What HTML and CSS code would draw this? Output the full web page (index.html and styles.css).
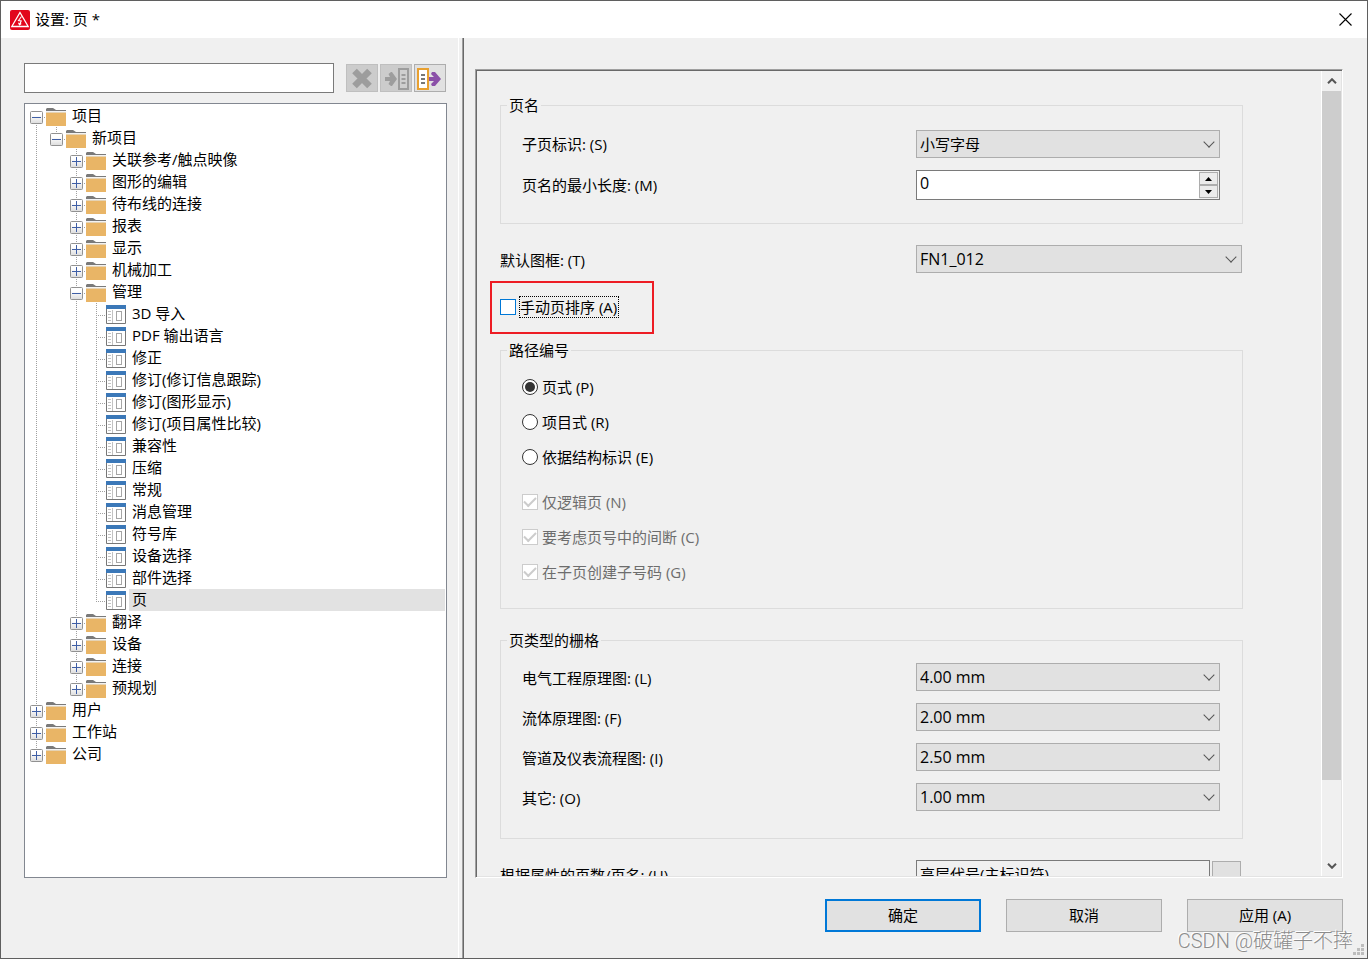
FILE: index.html
```html
<!DOCTYPE html>
<html lang="zh-CN">
<head>
<meta charset="utf-8">
<title>设置: 页 *</title>
<link rel="stylesheet" href="styles.css">
</head>
<body>
<svg class="sprite" aria-hidden="true">
  <defs>
    <linearGradient id="toggle-fill" x1="0" y1="0" x2="0" y2="1"><stop offset="0.3" stop-color="#fff"/><stop offset="1" stop-color="#dcdcdc"/></linearGradient>
    <symbol id="plus" viewBox="0 0 13 13"><rect x=".5" y=".5" width="12" height="12" rx="1" fill="url(#toggle-fill)" stroke="#919191"/><path d="M2 6.500h9M6.500 2v9" stroke="#3f5fa6"/></symbol>
    <symbol id="minus" viewBox="0 0 13 13"><rect x=".5" y=".5" width="12" height="12" rx="1" fill="url(#toggle-fill)" stroke="#919191"/><path d="M2 6.500h9" stroke="#3f5fa6"/></symbol>
    <symbol id="folder" viewBox="0 0 20 18"><path d="M0 1 1 0H7L10 2H20V3H0Z" fill="#7a7a7a"/><path d="M0 3h20v1H0z" fill="#f2f2f2"/><path d="M0 4h20v1H0z" fill="#e5d3b5"/><path d="M0 5h20v13H0z" fill="#e9b566"/></symbol>
    <symbol id="page" viewBox="0 0 20 19"><path d="M.5 1v17.500H19.500V1" fill="#fff" stroke="#777"/><path d="M0 0h20v4H0z" fill="#3b78b8"/><path d="M2 6.500h3M2 9.500h3M2 12.500h3M2 15.500h3" stroke="#c2c2c2"/><path d="M6.500 5v13" stroke="#c2c2c2"/><rect x="10.500" y="6.500" width="5" height="9" fill="#fff" stroke="#a6a6a6"/></symbol>
  </defs>
</svg>
<div class="window">
  <header class="titlebar">
    <svg class="app-icon" viewBox="0 0 20 20" aria-hidden="true"><rect width="20" height="20" rx="2" fill="#e2061c"/><path d="M10 2.500 18.200 16.500H1.800Z" fill="none" stroke="#fff" stroke-width="1.300"/><path d="M11.500 6.500 8.500 10.500l2.700.5-1.500 3.500M8.500 12.800l1 2 1.700-1.300" fill="none" stroke="#fff" stroke-width="1.100"/></svg>
    <h1 class="title">设置: 页 *</h1>
    <button class="close" type="button" aria-label="关闭"><svg viewBox="0 0 13 13" width="13" height="13"><path d="M.5.5l12 12M12.500.5l-12 12" stroke="#000" stroke-width="1.100"/></svg></button>
  </header>
  <div class="body">
    <aside class="sidebar">
      <div class="search">
        <input class="search-box" type="text" aria-label="搜索">
        <div class="tools">
          <button class="tool" type="button" aria-label="清除" disabled><svg viewBox="0 0 30 26"><path d="M7.500 6l15 15M22.500 6l-15 15" stroke="#9d9d9d" stroke-width="6.500"/></svg></button>
          <button class="tool" type="button" aria-label="导入" disabled><svg viewBox="0 0 30 26"><path d="M4 12h5L7.500 9 10 7h1l5 7-5 7h-1l-2.500-2L9 16H4z" fill="#9d9d9d"/><rect x="18" y="4" width="9" height="20" fill="#cfcfcf" stroke="#9d9d9d" stroke-width="2"/><path d="M20.500 10h4M20.500 14h4M20.500 18h4" stroke="#9d9d9d" stroke-width="2"/></svg></button>
          <button class="tool" type="button" aria-label="导出"><svg viewBox="0 0 30 26"><path d="M14 12h5l-3-3 1-2h3l6 7-6 7h-3l-1-2 3-3h-5z" fill="#8b50a8"/><rect x="3" y="4" width="10" height="20" fill="#fff" stroke="#e8a030" stroke-width="2"/><path d="M6 10h4M6 14h4M6 18h4" stroke="#777" stroke-width="2"/></svg></button>
        </div>
      </div>
      <div class="tree-box">
        <ul class="tree">
          <li><div class="row"><button class="toggle" type="button" aria-label="折叠"><svg><use href="#minus"/></svg></button><svg class="icon"><use href="#folder"/></svg><span class="name">项目</span></div>
            <ul class="tree">
              <li><div class="row"><button class="toggle" type="button" aria-label="折叠"><svg><use href="#minus"/></svg></button><svg class="icon"><use href="#folder"/></svg><span class="name">新项目</span></div>
                <ul class="tree">
                  <li><div class="row"><button class="toggle" type="button" aria-label="展开"><svg><use href="#plus"/></svg></button><svg class="icon"><use href="#folder"/></svg><span class="name">关联参考/触点映像</span></div></li>
                  <li><div class="row"><button class="toggle" type="button" aria-label="展开"><svg><use href="#plus"/></svg></button><svg class="icon"><use href="#folder"/></svg><span class="name">图形的编辑</span></div></li>
                  <li><div class="row"><button class="toggle" type="button" aria-label="展开"><svg><use href="#plus"/></svg></button><svg class="icon"><use href="#folder"/></svg><span class="name">待布线的连接</span></div></li>
                  <li><div class="row"><button class="toggle" type="button" aria-label="展开"><svg><use href="#plus"/></svg></button><svg class="icon"><use href="#folder"/></svg><span class="name">报表</span></div></li>
                  <li><div class="row"><button class="toggle" type="button" aria-label="展开"><svg><use href="#plus"/></svg></button><svg class="icon"><use href="#folder"/></svg><span class="name">显示</span></div></li>
                  <li><div class="row"><button class="toggle" type="button" aria-label="展开"><svg><use href="#plus"/></svg></button><svg class="icon"><use href="#folder"/></svg><span class="name">机械加工</span></div></li>
                  <li><div class="row"><button class="toggle" type="button" aria-label="折叠"><svg><use href="#minus"/></svg></button><svg class="icon"><use href="#folder"/></svg><span class="name">管理</span></div>
                    <ul class="tree leaves">
                      <li><div class="row"><svg class="icon"><use href="#page"/></svg><span class="name">3D 导入</span></div></li>
                      <li><div class="row"><svg class="icon"><use href="#page"/></svg><span class="name">PDF 输出语言</span></div></li>
                      <li><div class="row"><svg class="icon"><use href="#page"/></svg><span class="name">修正</span></div></li>
                      <li><div class="row"><svg class="icon"><use href="#page"/></svg><span class="name">修订(修订信息跟踪)</span></div></li>
                      <li><div class="row"><svg class="icon"><use href="#page"/></svg><span class="name">修订(图形显示)</span></div></li>
                      <li><div class="row"><svg class="icon"><use href="#page"/></svg><span class="name">修订(项目属性比较)</span></div></li>
                      <li><div class="row"><svg class="icon"><use href="#page"/></svg><span class="name">兼容性</span></div></li>
                      <li><div class="row"><svg class="icon"><use href="#page"/></svg><span class="name">压缩</span></div></li>
                      <li><div class="row"><svg class="icon"><use href="#page"/></svg><span class="name">常规</span></div></li>
                      <li><div class="row"><svg class="icon"><use href="#page"/></svg><span class="name">消息管理</span></div></li>
                      <li><div class="row"><svg class="icon"><use href="#page"/></svg><span class="name">符号库</span></div></li>
                      <li><div class="row"><svg class="icon"><use href="#page"/></svg><span class="name">设备选择</span></div></li>
                      <li><div class="row"><svg class="icon"><use href="#page"/></svg><span class="name">部件选择</span></div></li>
                      <li><div class="row"><svg class="icon"><use href="#page"/></svg><span class="name selected">页</span></div></li>
                    </ul>
                  </li>
                  <li><div class="row"><button class="toggle" type="button" aria-label="展开"><svg><use href="#plus"/></svg></button><svg class="icon"><use href="#folder"/></svg><span class="name">翻译</span></div></li>
                  <li><div class="row"><button class="toggle" type="button" aria-label="展开"><svg><use href="#plus"/></svg></button><svg class="icon"><use href="#folder"/></svg><span class="name">设备</span></div></li>
                  <li><div class="row"><button class="toggle" type="button" aria-label="展开"><svg><use href="#plus"/></svg></button><svg class="icon"><use href="#folder"/></svg><span class="name">连接</span></div></li>
                  <li><div class="row"><button class="toggle" type="button" aria-label="展开"><svg><use href="#plus"/></svg></button><svg class="icon"><use href="#folder"/></svg><span class="name">预规划</span></div></li>
                </ul>
              </li>
            </ul>
          </li>
          <li><div class="row"><button class="toggle" type="button" aria-label="展开"><svg><use href="#plus"/></svg></button><svg class="icon"><use href="#folder"/></svg><span class="name">用户</span></div></li>
          <li><div class="row"><button class="toggle" type="button" aria-label="展开"><svg><use href="#plus"/></svg></button><svg class="icon"><use href="#folder"/></svg><span class="name">工作站</span></div></li>
          <li><div class="row"><button class="toggle" type="button" aria-label="展开"><svg><use href="#plus"/></svg></button><svg class="icon"><use href="#folder"/></svg><span class="name">公司</span></div></li>
        </ul>
      </div>
    </aside>
    <div class="splitter"></div>
    <main class="content">
      <div class="panel">
        <form class="form">
          <fieldset class="group">
            <legend>页名</legend>
            <div class="fields fields-names">
              <label for="sub">子页标识: (S)</label>
              <span class="combo"><select id="sub"><option>小写字母</option></select></span>
              <label for="min">页名的最小长度: (M)</label>
              <span class="spin"><input id="min" class="latin" type="text" value="0"><span class="spin-buttons"><button type="button" aria-label="增加"><svg viewBox="0 0 7 4"><path d="M0 4 3.500 0 7 4z"/></svg></button><button type="button" aria-label="减少"><svg viewBox="0 0 7 4"><path d="M0 0 3.500 4 7 0z"/></svg></button></span></span>
            </div>
          </fieldset>
          <div class="line">
            <label for="frame">默认图框: (T)</label>
            <span class="combo"><select id="frame" class="latin"><option>FN1_012</option></select></span>
          </div>
          <div class="callout">
            <label class="option focused"><input type="checkbox"><span>手动页排序 (A)</span></label>
          </div>
          <fieldset class="group group-path">
            <legend>路径编号</legend>
            <div class="options">
              <label class="option"><input type="radio" name="path" checked><span>页式 (P)</span></label>
              <label class="option"><input type="radio" name="path"><span>项目式 (R)</span></label>
              <label class="option"><input type="radio" name="path"><span>依据结构标识 (E)</span></label>
              <div class="suboptions">
                <label class="option"><input type="checkbox" checked disabled><span>仅逻辑页 (N)</span></label>
                <label class="option"><input type="checkbox" checked disabled><span>要考虑页号中的间断 (C)</span></label>
                <label class="option"><input type="checkbox" checked disabled><span>在子页创建子号码 (G)</span></label>
              </div>
            </div>
          </fieldset>
          <fieldset class="group group-grid">
            <legend>页类型的栅格</legend>
            <div class="fields fields-grid">
              <label for="g1">电气工程原理图: (L)</label>
              <span class="combo"><select id="g1" class="latin"><option>4.00 mm</option></select></span>
              <label for="g2">流体原理图: (F)</label>
              <span class="combo"><select id="g2" class="latin"><option>2.00 mm</option></select></span>
              <label for="g3">管道及仪表流程图: (I)</label>
              <span class="combo"><select id="g3" class="latin"><option>2.50 mm</option></select></span>
              <label for="g4">其它: (O)</label>
              <span class="combo"><select id="g4" class="latin"><option>1.00 mm</option></select></span>
            </div>
          </fieldset>
          <div class="line line-last">
            <label for="prop">根据属性的页数/页名: (U)</label>
            <span class="browse"><input id="prop" type="text" value="高层代号(主标识符)" readonly><button type="button" aria-label="浏览"></button></span>
          </div>
        </form>
        <div class="scrollbar">
          <button type="button" aria-label="向上滚动"><svg viewBox="0 0 10 6"><path d="M1 5.200 5 1.200 9 5.200"/></svg></button>
          <div class="track"><div class="thumb"></div></div>
          <button type="button" aria-label="向下滚动"><svg viewBox="0 0 10 6"><path d="M1 .8 5 4.800 9 .8"/></svg></button>
        </div>
      </div>
      <footer class="actions">
        <button class="action primary" type="button">确定</button>
        <button class="action" type="button">取消</button>
        <button class="action" type="button">应用 (A)</button>
      </footer>
    </main>
  </div>
  <svg class="grip" viewBox="0 0 11 11" aria-hidden="true"><path d="M8 0h3v3H8zM4 4h3v3H4zM8 4h3v3H8zM0 8h3v3H0zM4 8h3v3H4zM8 8h3v3H8z" fill="#bdbdbd"/></svg>
  <div class="watermark">CSDN @破罐子不摔</div>
</div>
</body>
</html>
```

FILE: styles.css
```css
* {
  box-sizing: border-box;
}

body {
  margin: 0;
  color: #000;
  font: 15px/22px "Open Sans", "Noto Sans CJK SC", sans-serif;
}

button,
input,
select {
  margin: 0;
  padding: 0;
  border-radius: 0;
  color: inherit;
  font: inherit;
}

.sprite {
  position: absolute;
  width: 0;
  height: 0;
}

.window {
  position: relative;
  display: flex;
  flex-direction: column;
  height: 100vh;
  border: 1px solid #5f5f5f;
  background: #f0f0f0;
}

/* Title bar */
.titlebar {
  display: flex;
  align-items: center;
  gap: 5px;
  height: 37px;
  padding: 0 15px 0 9px;
  background: #fff;
}

.app-icon {
  width: 20px;
  height: 20px;
}

.title {
  flex: 1;
  margin: 0;
  padding-bottom: 2px;
  font-size: 15px;
  font-weight: 400;
  line-height: 20px;
}

.close {
  display: flex;
  border: 0;
  background: none;
}

.body {
  display: flex;
  flex: 1;
  min-height: 0;
}

/* Sidebar */
.sidebar {
  display: flex;
  flex-direction: column;
  gap: 10px;
  width: 446px;
  padding: 25px 0 80px 23px;
}

.search {
  display: flex;
  align-items: center;
  gap: 12px;
  padding-right: 1px;
}

.search-box {
  flex: 1;
  min-width: 0;
  height: 30px;
  padding: 0 4px;
  border: 1px solid #7a7a7a;
  background: #fff;
}

.tools {
  display: flex;
  gap: 2px;
}

.tool {
  width: 32px;
  height: 28px;
  border: 1px solid #adadad;
  background: #e1e1e1;
}

.tool:disabled {
  border-color: #bfbfbf;
  background: #ccc;
}

.tool svg {
  display: block;
  width: 30px;
  height: 26px;
}

.tree-box {
  flex: 1;
  min-height: 0;
  overflow: hidden;
  padding: 1px 1px 0 5px;
  border: 1px solid #828790;
  background: #fff;
}

.tree {
  margin: 0;
  padding: 0;
  list-style: none;
}

.tree .tree {
  padding-left: 20px;
}

.tree li {
  position: relative;
}

.tree li::before {
  content: "";
  position: absolute;
  top: 0;
  bottom: 0;
  left: 6px;
  width: 1px;
  background: repeating-linear-gradient(#a0a0a0 0 1px, transparent 1px 2px);
}

.tree-box > .tree > li:first-child::before {
  top: 12px;
}

.tree li:last-child::before {
  bottom: auto;
  height: 13px;
}

.row {
  position: relative;
  display: flex;
  align-items: center;
  gap: 3px;
  height: 22px;
}

.row::before {
  content: "";
  position: absolute;
  top: 12px;
  left: 6px;
  width: 10px;
  height: 1px;
  background: repeating-linear-gradient(90deg, #a0a0a0 0 1px, transparent 1px 2px);
}

.leaves .row {
  padding-left: 16px;
}

.toggle {
  position: relative;
  height: 13px;
  margin-top: 2px;
  border: 0;
  background: none;
}

.toggle svg {
  display: block;
  width: 13px;
  height: 13px;
}

.icon {
  width: 20px;
  height: 18px;
  margin-top: 2px;
}

.leaves .icon {
  height: 19px;
  margin-top: 1px;
}

.name {
  flex: 1;
  padding: 0 0 2px 3px;
  line-height: 20px;
  white-space: nowrap;
}

.selected {
  background: #e2e2e2;
}

.splitter {
  width: 6px;
  margin-left: 11px;
  border-left: 1px solid #fff;
  border-right: 1px solid #696969;
  box-shadow: inset -1px 0 #a0a0a0;
}

/* Settings */
.content {
  display: flex;
  flex: 1;
  flex-direction: column;
  gap: 21px;
  min-width: 0;
  padding: 31px 24px 26px 11px;
}

.panel {
  display: flex;
  flex: 1;
  min-height: 0;
  padding: 1px;
  border: 1px solid;
  border-color: #a0a0a0 #fff #fff #a0a0a0;
  box-shadow: inset 1px 1px #696969, inset -1px -1px #e3e3e3;
}

.form {
  flex: 1;
  min-width: 0;
  overflow: hidden;
  padding: 23px 78px 0 23px;
}

.group {
  min-width: 0;
  margin: 0;
  padding: 0;
  border: 1px solid #dcdcdc;
}

.group legend {
  margin-left: 6px;
  padding: 0 2px;
}

.group-path {
  margin-top: 5px;
}

.group-grid {
  margin-top: 20px;
}

.fields {
  display: grid;
  grid-template-columns: 394px 1fr;
  gap: 12px 0;
  align-items: center;
}

.fields-names {
  padding: 14px 22px 23px 21px;
}

.fields-grid {
  padding: 12px 22px 27px 21px;
}

.fields label,
.line label {
  padding-top: 2px;
}

.fields-names label,
.line-last label {
  padding-top: 0;
}

.line {
  display: grid;
  grid-template-columns: 416px 1fr;
  align-items: center;
  margin-top: 21px;
  padding-right: 1px;
}

.combo {
  position: relative;
  display: block;
}

.combo select {
  display: block;
  width: 100%;
  height: 28px;
  padding: 0 24px 1px 3px;
  border: 1px solid #adadad;
  background: #e1e1e1;
  appearance: none;
}

.combo .latin,
.spin .latin {
  font-size: 16px;
}

.combo::after {
  content: "";
  position: absolute;
  top: 8px;
  right: 7px;
  width: 7px;
  height: 7px;
  border: solid #555;
  border-width: 0 1px 1px 0;
  transform: rotate(45deg);
  pointer-events: none;
}

.spin {
  display: flex;
  height: 30px;
  border: 1px solid #7a7a7a;
  background: #fff;
}

.spin input {
  flex: 1;
  min-width: 0;
  padding: 0 3px 4px;
  border: 0;
  background: none;
}

.spin-buttons {
  display: grid;
  width: 20px;
  padding: 1px 1px 1px 0;
  background: #f0f0f0;
}

.spin-buttons button {
  display: grid;
  place-items: center;
  border: 1px solid #adadad;
  background: #ebebeb;
}

.spin-buttons svg {
  width: 7px;
  height: 4px;
}

.callout {
  width: fit-content;
  min-width: 164px;
  margin: 8px 0 0 -10px;
  padding: 13px 31px 14px 8px;
  border: 2px solid #ed1c24;
}

.option {
  display: flex;
  align-items: center;
  gap: 4px;
  width: fit-content;
}

.option input {
  display: grid;
  place-items: center;
  width: 16px;
  height: 16px;
  border: 1px solid #333;
  background: #fff;
  appearance: none;
}

.option input[type="radio"] {
  border-radius: 50%;
}

.option input[type="radio"]:checked::after {
  content: "";
  width: 10px;
  height: 10px;
  border-radius: 50%;
  background: #333;
}

.option input:disabled {
  border-color: #ccc;
}

.option input[type="checkbox"]:checked::after {
  content: "";
  width: 10px;
  height: 5px;
  margin-bottom: 3px;
  border: solid #ccc;
  border-width: 0 0 2px 2px;
  transform: rotate(-45deg);
}

.option input:disabled + span {
  color: #6d6d6d;
}

.focused {
  gap: 3px;
}

.focused input {
  border-color: #0078d7;
}

.focused span {
  outline: 1px dotted #000;
  outline-offset: -1px;
  padding: 0 2px 0 1px;
}

.options,
.suboptions {
  display: flex;
  flex-direction: column;
  gap: 13px;
}

.options {
  padding: 15px 21px 25px;
}

.suboptions {
  padding-top: 10px;
}

.browse {
  display: flex;
  align-items: center;
  gap: 2px;
  padding-right: 1px;
}

.browse input {
  flex: 1;
  min-width: 0;
  height: 30px;
  padding: 0 3px 4px;
  border: 1px solid #7a7a7a;
  background: #f0f0f0;
}

.browse button {
  width: 29px;
  height: 28px;
  border: 1px solid #adadad;
  background: #e1e1e1;
}

/* Scroll bar */
.scrollbar {
  display: flex;
  flex-direction: column;
  width: 20px;
  border-left: 1px solid #fff;
  background: #f0f0f0;
}

.scrollbar button {
  display: grid;
  place-items: center;
  height: 20px;
  border: 0;
  background: none;
}

.scrollbar svg {
  width: 10px;
  height: 6px;
  fill: none;
  stroke: #555;
  stroke-width: 2;
}

.track {
  flex: 1;
}

.thumb {
  height: 90%;
  background: #cdcdcd;
}

/* Dialog buttons */
.actions {
  display: flex;
  justify-content: flex-end;
  gap: 25px;
}

.action {
  width: 156px;
  height: 33px;
  padding-bottom: 2px;
  border: 1px solid #adadad;
  background: #e1e1e1;
}

.primary {
  border: 2px solid #0078d7;
}

.grip {
  position: absolute;
  right: 3px;
  bottom: 3px;
  width: 11px;
  height: 11px;
}

.watermark {
  position: absolute;
  right: 14px;
  bottom: 4px;
  color: #8c8c8c;
  font: 20px/26px Roboto, "Noto Sans CJK SC", sans-serif;
  font-weight: 300;
  text-shadow: -1px -1px 0 #fff;
}
```
